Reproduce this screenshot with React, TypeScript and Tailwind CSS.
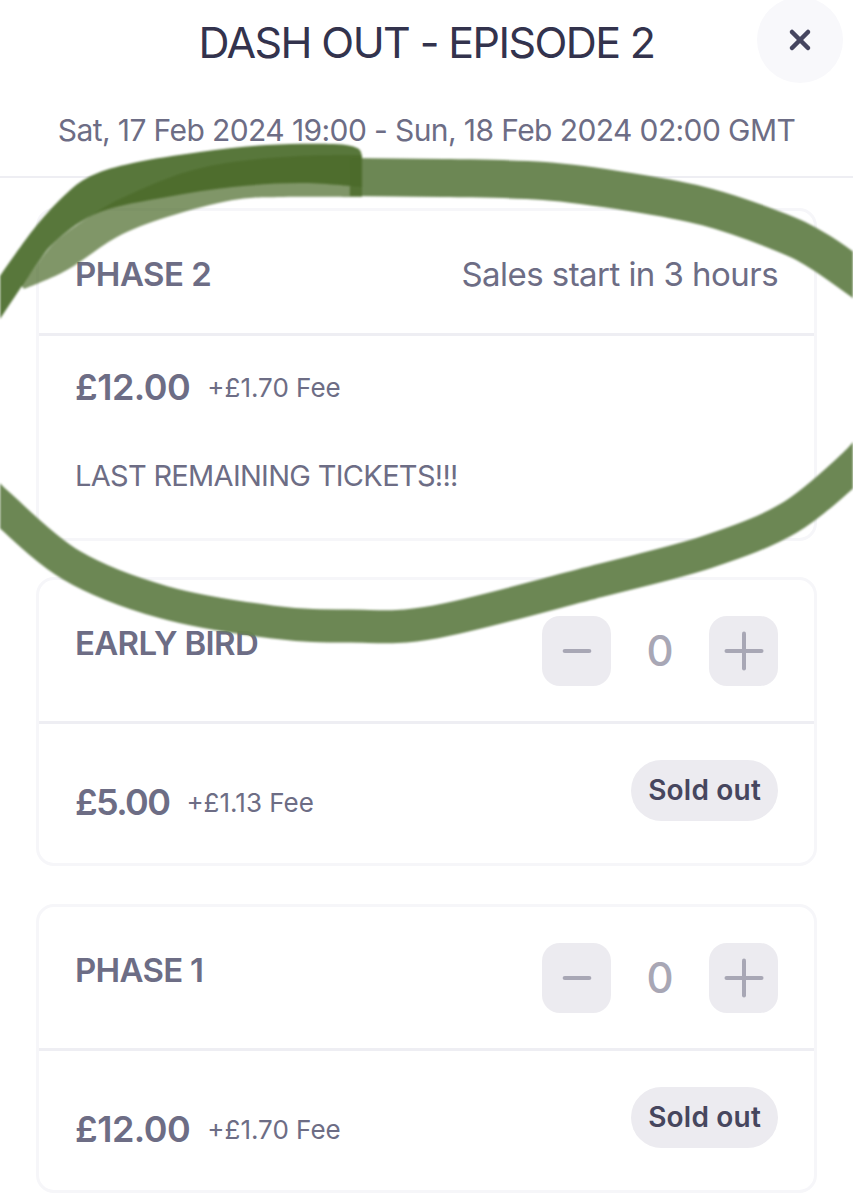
import React from 'react'
import { Minus, Plus, X } from 'lucide-react'

type Point = [number, number]

// smooth line through the hand-drawn points
function curve(points: Point[]) {
  let d = `M${points[0][0]} ${points[0][1]}`
  for (let i = 0; i < points.length - 1; i++) {
    const p0 = points[Math.max(i - 1, 0)]
    const p1 = points[i]
    const p2 = points[i + 1]
    const p3 = points[Math.min(i + 2, points.length - 1)]
    d += ` C${p1[0] + (p2[0] - p0[0]) / 6} ${p1[1] + (p2[1] - p0[1]) / 6} ${p2[0] - (p3[0] - p1[0]) / 6} ${p2[1] - (p3[1] - p1[1]) / 6} ${p2[0]} ${p2[1]}`
  }
  return d
}

const topRight: Point[] = [[350, 177], [450, 178], [544, 181], [630, 192], [707, 207], [780, 232], [820, 252], [870, 287]]
const bottom: Point[] = [[875, 440], [853, 466], [789, 518], [707, 552], [598, 581], [435, 622], [350, 626], [272, 622], [163, 602], [71, 565], [0, 506], [-20, 485]]

// first pen stroke, its outer edge then its lower edge
const strokeOuter: Point[] = [[-14, 296], [33, 230], [67, 193], [93, 175], [133, 163], [200, 152], [267, 145], [333, 144], [357, 148], [362, 156]]
const strokeInner: Point[] = [[362, 187], [300, 183], [233, 187], [167, 197], [100, 212], [57, 240], [33, 270], [-14, 340]]
// second, paler pass that ends at the same spot
const paleLower: Point[] = [[24, 289], [67, 270], [117, 237], [167, 217], [233, 200], [283, 197], [362, 197]]
const paleUpper: Point[] = [[362, 155], [300, 156], [233, 162], [183, 173], [133, 193], [100, 210], [57, 240], [33, 270], [21, 285]]

function Stepper() {
  return (
    <div className="flex items-center">
      <div className="flex h-[70px] w-[69px] items-center justify-center rounded-[18px] bg-[#ecebf0] text-[#a8a7b5]">
        <Minus size={42} strokeWidth={2.4} />
      </div>
      <span className="w-[98px] text-center text-[42px] leading-none font-medium text-[#a8a7b5]">0</span>
      <div className="flex h-[70px] w-[69px] items-center justify-center rounded-[18px] bg-[#ecebf0] text-[#a8a7b5]">
        <Plus size={60} strokeWidth={1.6} />
      </div>
    </div>
  )
}

function Price({ price, fee, priceClass = 'tracking-[-0.5px]' }: { price: string; fee: string; priceClass?: string }) {
  return (
    <div className="flex items-center gap-[17px]">
      <span className={`text-[36px] font-semibold text-[#6d6d85] ${priceClass}`}>{price}</span>
      <span className="text-[26px] text-[#6d6d85]">{fee}</span>
    </div>
  )
}

function TicketCard({ name, price, fee, priceClass }: { name: string; price: string; fee: string; priceClass?: string }) {
  return (
    <div className="h-[289px] rounded-[18px] border-[3px] border-[#f6f6f9]">
      <div className="flex h-[144px] items-start justify-between border-b-[3px] border-[#eeeef3] px-[36px] pt-[36px]">
        <span className="mt-[3px] text-[33px] font-semibold tracking-[-0.7px] text-[#6d6d85]">{name}</span>
        <Stepper />
      </div>
      <div className="flex items-start justify-between px-[36px]">
        <div className="pt-[51px]">
          <Price price={price} fee={fee} priceClass={priceClass} />
        </div>
        <div className="mt-[36px] rounded-full bg-[#ecebf0] px-[17px] py-[11px] text-[28px] leading-[39px] font-semibold tracking-[0.2px] text-[#46465e]">
          Sold out
        </div>
      </div>
    </div>
  )
}

export default function App() {
  return (
    <div className="relative h-[1200px] w-[853px] overflow-hidden bg-white font-['Inter','Liberation_Sans',sans-serif]">
      <div className="relative flex h-[88px] items-center justify-center pb-[4px]">
        <h1 className="text-[43px] font-normal tracking-[-1.6px] text-[#33334d]">DASH OUT - EPISODE 2</h1>
        <div className="absolute right-[10px] top-[-3px] flex h-[86px] w-[86px] items-center justify-center rounded-full bg-[#f8f8fb] text-[#45455f]">
          <X size={32} strokeWidth={3.4} />
        </div>
      </div>
      <div className="flex h-[90px] items-start justify-center border-b-[2px] border-[#eeeef3] pt-[20px] text-[30px] leading-[44px] tracking-[-0.6px] text-[#6d6d85]">
        Sat, 17 Feb 2024 19:00 - Sun, 18 Feb 2024 02:00 GMT
      </div>

      <div className="flex flex-col px-[36px] pt-[30px]">
        <div className="h-[333px] rounded-[18px] border-[3px] border-[#f6f6f9]">
          <div className="flex h-[125px] items-center justify-between border-b-[3px] border-[#eeeef3] px-[36px] pt-[6px]">
            <span className="text-[33px] font-semibold tracking-[-0.5px] text-[#6d6d85]">PHASE 2</span>
            <span className="text-[33px] tracking-[-0.55px] text-[#6d6d85]">Sales start in 3 hours</span>
          </div>
          <div className="px-[36px] pt-[24px]">
            <Price price="£12.00" fee="+£1.70 Fee" />
            <p className="mt-[40px] text-[29px] tracking-[-0.7px] text-[#6d6d85]">LAST REMAINING TICKETS!!!</p>
          </div>
        </div>
        <div className="mt-[36px] flex flex-col gap-[38px]">
          <TicketCard name="EARLY BIRD" price="£5.00" fee="+£1.13 Fee" priceClass="tracking-[-1.6px]" />
          <TicketCard name="PHASE 1" price="£12.00" fee="+£1.70 Fee" />
        </div>
      </div>

      {/* marker pen circle drawn over the first ticket */}
      <svg className="absolute inset-0 blur-[0.8px]" width="853" height="1200" viewBox="0 0 853 1200" fill="none">
        <path d={curve(topRight)} stroke="#67834e" strokeOpacity="0.97" strokeWidth="38" />
        <path d={curve(bottom)} stroke="#67834e" strokeOpacity="0.97" strokeWidth="33" />
        <path d={curve(strokeOuter) + ' L' + curve(strokeInner).slice(1) + ' Z'} fill="#4f7030" fillOpacity="0.95" />
        <path d={curve(paleLower) + ' L' + curve(paleUpper).slice(1) + ' Z'} fill="#4a6a28" fillOpacity="0.7" />
      </svg>
    </div>
  )
}
